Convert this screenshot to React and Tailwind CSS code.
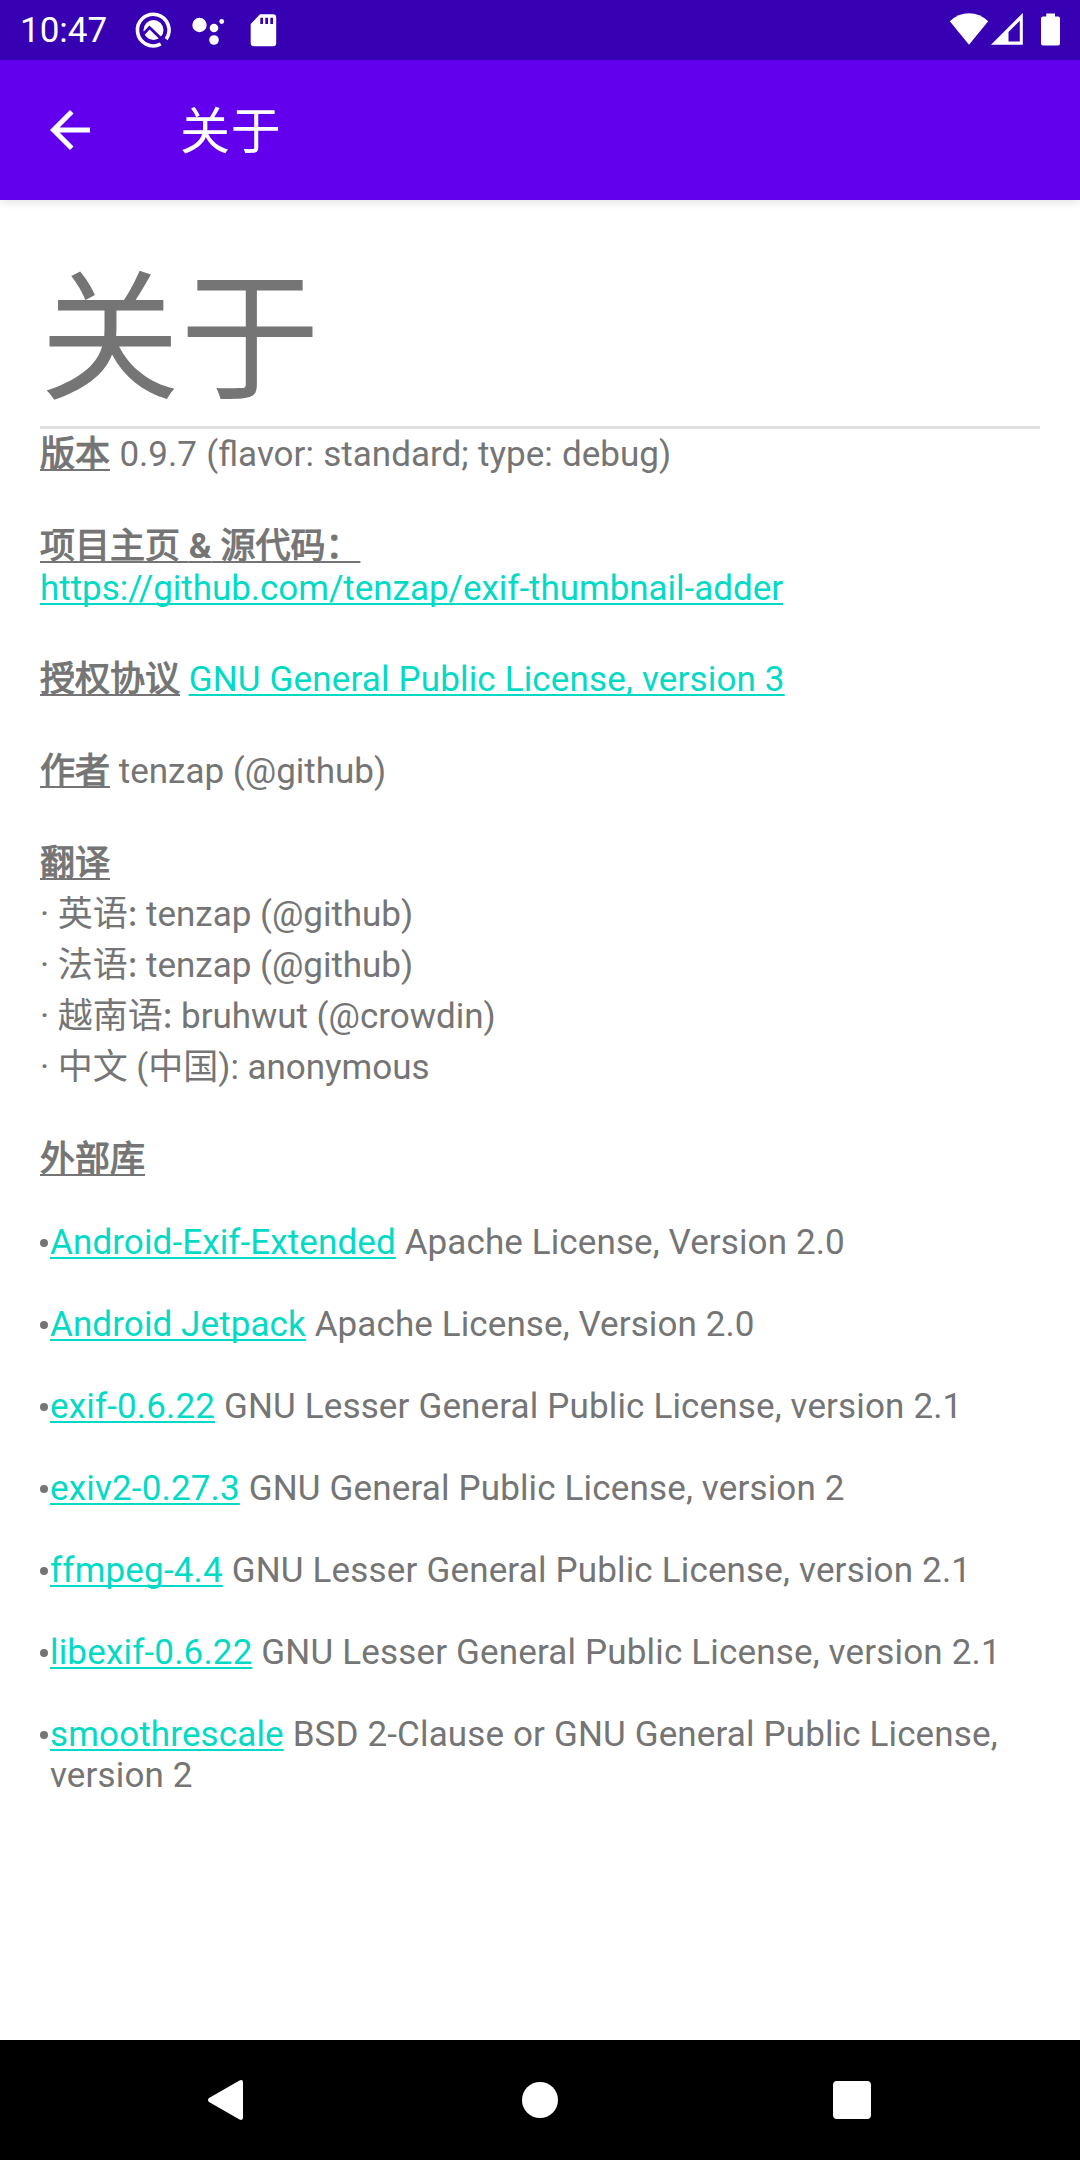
const libraries = [
  ["Android-Exif-Extended", "Apache License, Version 2.0", "tracking-[0.11px]"],
  ["Android Jetpack", "Apache License, Version 2.0", "tracking-[0.1px]"],
  ["exif-0.6.22", "GNU Lesser General Public License, version 2.1", "tracking-[0.15px]"],
  ["exiv2-0.27.3", "GNU General Public License, version 2", "tracking-[0.16px]"],
  ["ffmpeg-4.4", "GNU Lesser General Public License, version 2.1", "tracking-[0.17px]"],
  ["libexif-0.6.22", "GNU Lesser General Public License, version 2.1", "tracking-[0.17px]"],
  ["smoothrescale", "BSD 2-Clause or GNU General Public License, version 2", "tracking-[0.14px]"],
];

const translators = [
  ["英语:", "tenzap (@github)"],
  ["法语:", "tenzap (@github)"],
  ["越南语:", "bruhwut (@crowdin)"],
];

function Label({ children }) {
  return (
    <span className="underline decoration-2 underline-offset-[3px] [-webkit-text-stroke:1.1px_#757575] [text-decoration-skip-ink:none]">
      {children}
    </span>
  );
}

function Link({ children }) {
  return (
    <a className="text-[#03dac5] underline decoration-2 underline-offset-[3px] [text-decoration-skip-ink:none]">
      {children}
    </a>
  );
}

function StatusBar() {
  return (
    <header className="flex h-[60px] shrink-0 items-center bg-[#3700b3] pl-5 text-white">
      <span className="w-[110px] text-[35px] leading-[41px]">10:47</span>
      <svg className="h-[60px] w-[150px]" viewBox="130 0 150 60" fill="currentColor">
        <path
          d="M160.7 44A15.8 15.8 0 1 1 166.2 39.1"
          fill="none"
          stroke="currentColor"
          strokeWidth="3.6"
        />
        <circle cx="153.5" cy="30" r="10" />
        <path
          d="M143.5 34L149.5 27.5L163.5 41"
          fill="none"
          stroke="#3700b3"
          strokeWidth="2.8"
        />
        <circle cx="199.5" cy="25" r="7.2" />
        <circle cx="214" cy="28" r="4.3" />
        <circle cx="221.7" cy="21.5" r="2.4" />
        <circle cx="214" cy="40" r="4.8" />
        <path
          fillRule="evenodd"
          d="M260 14.3H273Q276.2 14.3 276.2 17.5V43Q276.2 46.2 273 46.2H254Q250.7 46.2 250.7 43V24ZM260.3 17.8V24H263V17.8ZM265.3 17.8V24H268V17.8ZM270.3 17.8V24H273V17.8Z"
        />
      </svg>
      <svg className="ml-auto h-[60px] w-[150px]" viewBox="930 0 150 60" fill="currentColor">
        <path d="M969 44.7L949.8 21.3Q958 13.2 969 13.2T988.2 21.3Z" />
        <path
          fillRule="evenodd"
          d="M991 44.8L1022.8 13V44.8ZM1008.5 32V41.5H1019.8V20.7Z"
        />
        <path d="M1046.3 16.5V13.5H1055V16.5H1058Q1060 16.5 1060 18.5V43.5Q1060 45.5 1058 45.5H1043Q1041 45.5 1041 43.5V18.5Q1041 16.5 1043 16.5Z" />
      </svg>
    </header>
  );
}

function Toolbar() {
  return (
    <div className="z-10 flex h-[140px] shrink-0 items-center bg-[#6200ee] pl-10 text-white shadow-[0_3px_8px_rgba(0,0,0,0.1)]">
      <svg className="size-[60px]" viewBox="0 0 24 24" fill="currentColor">
        <path d="M20 11H7.83l5.59-5.59L12 4l-8 8 8 8 1.41-1.41L7.83 13H20v-2z" />
      </svg>
      <h1 className="mt-[3px] ml-20 text-[50px] leading-[60px] tracking-[0.7px]">关于</h1>
    </div>
  );
}

function NavBar() {
  return (
    <nav className="flex h-[120px] shrink-0 items-center bg-black pl-[207px]">
      <svg className="h-10 w-9" viewBox="0 0 36 40" fill="white">
        <path d="M2 18L32.5 0.5Q36 -1 36 2.5V37.5Q36 41 32.5 39.5L2 22Q0 20 2 18Z" />
      </svg>
      <div className="ml-[279px] size-9 rounded-full bg-white" />
      <div className="ml-[275px] size-[38px] rounded-[4px] bg-white" />
    </nav>
  );
}

export default function App() {
  return (
    <div className="flex h-[2160px] w-[1080px] flex-col overflow-hidden bg-white font-[Roboto,'Noto_Sans_CJK_SC',sans-serif]">
      <StatusBar />
      <Toolbar />
      <main className="flex-1 px-10 pt-[47px] text-[35px] leading-[41px] text-[#757575]">
        <h2 className="h-[179px] text-[140px] leading-[186px]">关于</h2>
        <div className="h-[3px] bg-[#e0e0e0]" />
        <p className="mt-[5px] [word-spacing:0.7px]">
          <Label>版本</Label> 0.9.7 (flavor: standard; type: debug)
        </p>
        <p className="mt-[51px]">
          <Label>
            项目主页 <b className="[-webkit-text-stroke:0]">&amp;</b> 源代码：
          </Label>
        </p>
        <p className="mt-px tracking-[-0.03px]">
          <Link>https://github.com/tenzap/exif-thumbnail-adder</Link>
        </p>
        <p className="mt-[50px]">
          <Label>授权协议</Label>{" "}
          <span className="tracking-[0.16px]">
            <Link>GNU General Public License, version 3</Link>
          </span>
        </p>
        <p className="mt-[51px]">
          <Label>作者</Label> tenzap (@github)
        </p>
        <p className="mt-[51px]">
          <Label>翻译</Label>
        </p>
        <ul className="mt-2.5 flex flex-col gap-2.5">
          {translators.map(([language, name]) => (
            <li key={language} className="h-[41px] tracking-[-0.03px]">
              · <span className="font-['Noto_Sans_CJK_SC'] leading-[0]">{language}</span> {name}
            </li>
          ))}
          <li className="h-[41px] tracking-[-0.03px]">· 中文 (中国): anonymous</li>
        </ul>
        <p className="mt-[51px]">
          <Label>外部库</Label>
        </p>
        <ul className="mt-[42px] flex flex-col gap-[41px]">
          {libraries.map(([name, license, tracking]) => (
            <li key={name} className="flex">
              <span className="mt-[17px] mr-0.5 size-2 shrink-0 rounded-full bg-[#757575]" />
              <p className={tracking}>
                <Link>{name}</Link> {license}
              </p>
            </li>
          ))}
        </ul>
      </main>
      <NavBar />
    </div>
  );
}
